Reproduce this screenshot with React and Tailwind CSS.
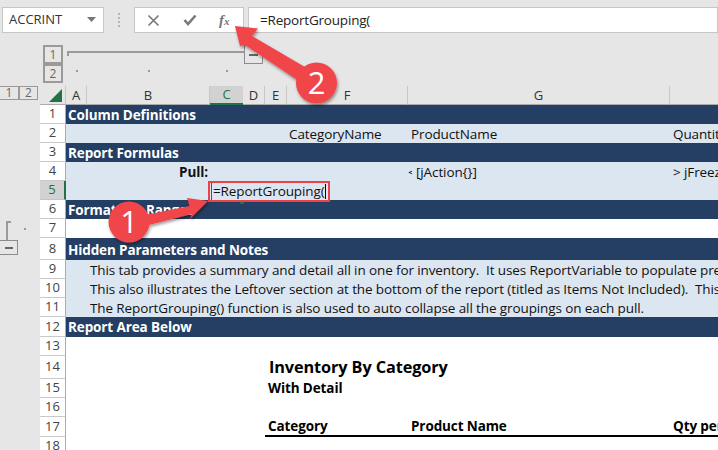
import React from "react";

const BODY = "grid grid-cols-[21px_123px_33px_22px_22px_121px_262px_48px] flex-1 min-w-0 overflow-hidden text-[13.5px] tracking-[-0.11px] text-[#111]";
const DARK = "bg-[#243f63] text-white font-bold";
const LIGHT = "bg-[#dce6f1]";
const CELL = "whitespace-nowrap leading-[21px]";

function RowNum({ n, active }) {
  return (
    <div className={active
      ? "w-[26px] shrink-0 flex items-center justify-center bg-[#d2d2d2] border-r-2 border-[#217346] border-b border-b-[#c4c4c4] text-[#217346] text-[13px]"
      : "w-[26px] shrink-0 flex items-center justify-center border-r border-[#ababab] border-b border-b-[#c9c9c9] text-[#444] text-[13px]"}>
      {n}
    </div>
  );
}

function Row({ n, h, tone, active, gutter, children }) {
  return (
    <div className={`flex ${h}`}>
      <div className="w-[40px] shrink-0 relative">{gutter}</div>
      <RowNum n={n} active={active} />
      <div className={`${BODY} ${tone}`}>{children}</div>
    </div>
  );
}

function ColHead({ w, label, active }) {
  return (
    <div className={active
      ? `${w} shrink-0 flex items-center justify-center pt-[1px] bg-[#d2d2d2] border-b-2 border-[#217346] text-[#217346]`
      : `${w} shrink-0 flex items-center justify-center pt-[1px] border-r border-[#c6c6c6] border-b border-b-[#ababab] text-[#333]`}>
      {label}
    </div>
  );
}

function Level({ n, cls }) {
  return <div className={`flex items-center justify-center border-2 border-[#9a9a9a] text-[#666] text-[12px] ${cls}`}>{n}</div>;
}

export default function App() {
  return (
    <div className="relative w-[718px] h-[450px] overflow-hidden bg-[#e6e6e6] flex flex-col font-['Open_Sans',sans-serif]">
      {/* Formula bar */}
      <div className="h-[38px] shrink-0 flex items-start pt-[7px] pl-[2px]">
        <div className="w-[102px] h-[26px] bg-white border border-[#c6c6c6] flex items-center justify-between pl-[6px] pr-[3px] text-[13px] text-[#333]">
          <span>ACCRINT</span>
          <svg width="14" height="8" viewBox="0 0 14 8"><path d="M1 1h9l-4.5 5z" fill="#777" /></svg>
        </div>
        <div className="w-[30px] h-[26px] flex flex-col items-center justify-center gap-[2px]">
          <i className="w-[2px] h-[2px] bg-[#b5b5b5]" />
          <i className="w-[2px] h-[2px] bg-[#b5b5b5]" />
          <i className="w-[2px] h-[2px] bg-[#b5b5b5]" />
          <i className="w-[2px] h-[2px] bg-[#b5b5b5]" />
        </div>
        <div className="w-[110px] h-[26px] bg-white border border-[#c6c6c6] flex items-center text-[#7a7a7a]">
          <svg className="ml-[12px]" width="13" height="13" viewBox="0 0 13 13"><path d="M1.5 1.5l10 10M11.5 1.5l-10 10" stroke="#777" strokeWidth="1.6" fill="none" /></svg>
          <svg className="ml-[23px]" width="14" height="12" viewBox="0 0 14 12"><path d="M1.5 6l3.5 4 7.500-8.500" stroke="#7a7a7a" strokeWidth="2.600" fill="none" /></svg>
          <span className="ml-[22px] font-['Liberation_Serif',serif] italic font-bold text-[15px] leading-none text-[#777]">f<span className="text-[11px]">x</span></span>
        </div>
        <div className="ml-[4px] flex-1 h-[26px] bg-white border border-[#c6c6c6] flex items-center pl-[11px] text-[13.5px] tracking-[-0.2px] text-[#222]">
          =ReportGrouping(
        </div>
      </div>

      {/* Outline level area */}
      <div className="h-[48px] shrink-0 relative">
        <Level n="1" cls="absolute left-[43px] top-[7px] w-[20px] h-[19px]" />
        <Level n="2" cls="absolute left-[43px] top-[26px] w-[20px] h-[19px]" />
        <div className="absolute left-[67px] top-[13px] w-[178px] h-[2px] bg-[#9a9a9a]" />
        <div className="absolute left-[67px] top-[13px] w-[2px] h-[5px] bg-[#9a9a9a]" />
        <div className="absolute left-[244px] top-[7px] w-[19px] h-[19px] border border-[#8c8c8c] flex items-center justify-center">
          <i className="w-[9px] h-[2px] bg-[#666]" />
        </div>
        <i className="absolute left-[76px] top-[32px] w-[2px] h-[2px] bg-[#999]" />
        <i className="absolute left-[148px] top-[32px] w-[2px] h-[2px] bg-[#999]" />
        <i className="absolute left-[226px] top-[32px] w-[2px] h-[2px] bg-[#999]" />
      </div>

      {/* Column headers */}
      <div className="h-[19px] shrink-0 flex text-[13px]">
        <div className="w-[40px] shrink-0 flex">
          <Level n="1" cls="w-[19px] h-[14px] border-[1.5px] border-l-0" />
          <Level n="2" cls="w-[19px] h-[14px] border-[1.5px]" />
        </div>
        <div className="w-[26px] shrink-0 flex items-end justify-end pr-[3px] pb-[2px] border-r border-[#c6c6c6] border-b border-b-[#ababab]">
          <svg width="13" height="13" viewBox="0 0 13 13"><path d="M13 0v13H0z" fill="#217346" /></svg>
        </div>
        <ColHead w="w-[21px]" label="A" />
        <ColHead w="w-[123px]" label="B" />
        <ColHead w="w-[33px]" label="C" active />
        <ColHead w="w-[22px]" label="D" />
        <ColHead w="w-[22px]" label="E" />
        <ColHead w="w-[121px]" label="F" />
        <ColHead w="w-[262px]" label="G" />
        <div className="flex-1 border-b border-[#ababab]" />
      </div>

      {/* Sheet */}
      <div className="flex-1 flex flex-col bg-white relative">
        <div className="absolute inset-y-0 left-0 w-[40px] bg-[#e6e6e6]" />
        <div className="relative flex flex-col">
          <Row n="1" h="h-[19px]" tone={DARK}><div className={`col-span-8 pl-[2px] ${CELL}`}>Column Definitions</div></Row>
          <Row n="2" h="h-[19px]" tone={LIGHT}>
            <div className={`col-start-6 pl-[2px] ${CELL}`}>CategoryName</div>
            <div className={`col-start-7 pl-[3px] ${CELL}`}>ProductName</div>
            <div className={`col-start-8 pl-[3px] ${CELL}`}>Quantity</div>
          </Row>
          <Row n="3" h="h-[19px]" tone={DARK}><div className={`col-span-8 pl-[2px] ${CELL}`}>Report Formulas</div></Row>
          <Row n="4" h="h-[19px]" tone={LIGHT}>
            <div className={`col-start-2 pr-[2px] text-right font-bold ${CELL}`}>Pull:</div>
            <div className={`col-start-7 ${CELL}`}>
              <span className="inline-block align-top h-[21px] w-[4px] overflow-hidden mr-[4px]">&lt;</span>[jAction{"{}"}]
            </div>
            <div className={`col-start-8 pl-[3px] ${CELL}`}>&gt; jFreeze</div>
          </Row>
          <Row n="5" h="h-[19px]" tone={LIGHT} active>
            <div className={`col-start-3 col-span-3 pl-[3px] relative z-10 ${CELL}`}>=ReportGrouping(</div>
          </Row>
          <Row n="6" h="h-[19px]" tone={DARK}>
            <div className={`col-span-6 pl-[2px] ${CELL}`}>Formatting Ranges</div>
            <div className="col-start-7 self-end h-[1px] bg-white" />
          </Row>
          <Row n="7" h="h-[19px]" tone="bg-white" gutter={
            <>
              <div className="absolute left-[6px] top-[2px] w-[5px] h-[19px] border-l-2 border-t-2 border-[#9a9a9a]" />
              <i className="absolute left-[24px] top-[9px] w-[2px] h-[2px] bg-[#999]" />
            </>
          } />
          <Row n="8" h="h-[22px]" tone={DARK} gutter={
            <div className="absolute left-0 top-[2px] w-[18px] h-[15px] border border-l-0 border-[#8c8c8c] flex items-center justify-center">
              <i className="w-[8px] h-[2px] bg-[#666]" />
            </div>
          }><div className={`col-span-8 pl-[2px] pt-[2px] ${CELL}`}>Hidden Parameters and Notes</div></Row>
          <Row n="9" h="h-[19px]" tone={LIGHT}>
            <div className={`col-start-2 pl-[3px] ${CELL}`}>This tab provides a summary and detail all in one for inventory.&nbsp; It uses ReportVariable to populate pre</div>
          </Row>
          <Row n="10" h="h-[19px]" tone={LIGHT}>
            <div className={`col-start-2 pl-[3px] ${CELL}`}>This also illustrates the Leftover section at the bottom of the report (titled as Items Not Included).&nbsp; This</div>
          </Row>
          <Row n="11" h="h-[19px]" tone={LIGHT}>
            <div className={`col-start-2 pl-[3px] ${CELL}`}>The ReportGrouping() function is also used to auto collapse all the groupings on each pull.</div>
          </Row>
          <Row n="12" h="h-[20px]" tone={DARK}><div className={`col-span-8 pl-[2px] ${CELL}`}>Report Area Below</div></Row>
          <Row n="13" h="h-[19px]" tone="bg-white" />
          <Row n="14" h="h-[23px]" tone="bg-white">
            <div className="col-start-5 col-span-4 pl-[4px] whitespace-nowrap leading-[23px] font-bold text-[16.3px] text-black">Inventory By Category</div>
          </Row>
          <Row n="15" h="h-[19px]" tone="bg-white">
            <div className="col-start-5 col-span-4 pl-[3px] whitespace-nowrap leading-[19px] font-bold text-black">With Detail</div>
          </Row>
          <Row n="16" h="h-[19px]" tone="bg-white" />
          <Row n="17" h="h-[20px]" tone="bg-white">
            <div className="col-start-5 col-span-2 pl-[3px] border-b-2 border-black whitespace-nowrap leading-[18px] font-bold text-black">Category</div>
            <div className="col-start-7 pl-[3px] border-b-2 border-black whitespace-nowrap leading-[18px] font-bold text-black">Product Name</div>
            <div className="col-start-8 pl-[3px] border-b-2 border-black whitespace-nowrap leading-[18px] font-bold text-black">Qty per</div>
          </Row>
          <Row n="18" h="h-[19px]" tone="bg-white" />
        </div>
      </div>

      {/* Editing cell callout */}
      <div className="absolute left-[208px] top-[181px] w-[122px] h-[21px] border-2 border-[#ec4245] pointer-events-none">
        <i className="absolute left-[1px] top-0 h-full w-[1px] bg-[#217346]" />
        <i className="absolute left-[115px] top-[1px] h-[15px] w-[1px] bg-black" />
      </div>
      <i className="absolute left-[240px] top-[202px] w-[4px] h-[2px] bg-[#217346]" />

      {/* Annotation arrows */}
      <svg className="absolute left-0 top-0 pointer-events-none" width="718" height="450" viewBox="0 0 718 450">
        <defs>
          <filter id="sh" x="-20%" y="-20%" width="140%" height="140%">
            <feDropShadow dx="1" dy="2" stdDeviation="1.500" floodColor="#000" floodOpacity="0.4" />
          </filter>
        </defs>
        <g filter="url(#sh)" fill="#f0444a">
          <path d="M208 201L187 198L189.500 206L135 217L137 228L192 214L190 219z" />
          <circle cx="129" cy="222" r="20.500" />
          <path d="M235 26L258 28.500L252 36L322 77L312 90L245 45L240 46z" />
          <circle cx="316.500" cy="83" r="20.500" />
        </g>
        <text x="129" y="233" textAnchor="middle" fontFamily="'Open Sans',sans-serif" fontSize="31" fill="#fff">1</text>
        <text x="316.500" y="94" textAnchor="middle" fontFamily="'Open Sans',sans-serif" fontSize="31" fill="#fff">2</text>
      </svg>
    </div>
  );
}
